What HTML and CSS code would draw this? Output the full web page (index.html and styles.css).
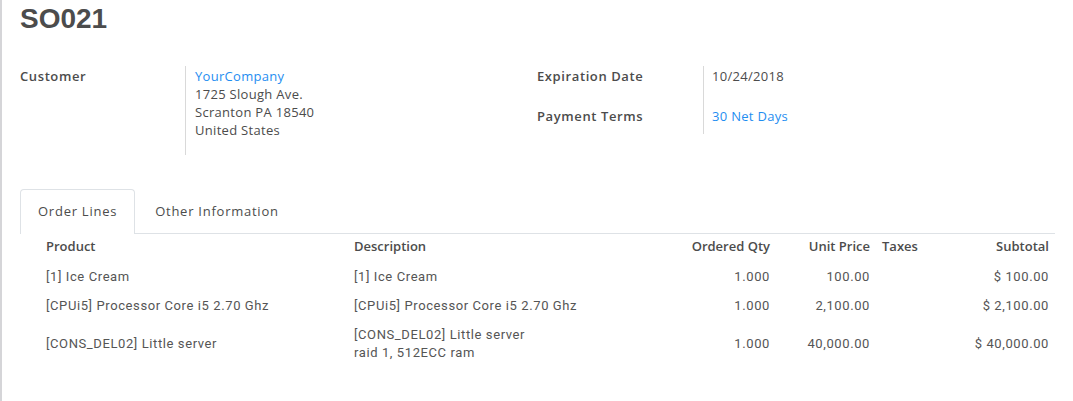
FILE: index.html
```html
<!DOCTYPE html>
<html>
<head>
<meta charset="utf-8">
<link rel="stylesheet" href="styles.css">
</head>
<body>
<div class="sheet">
  <h1 class="title">SO021</h1>
  <div class="groups">
    <div class="group group-left">
      <div class="pair">
        <div class="label">Customer</div>
        <div class="val val-address">
          <a class="link">YourCompany</a>
          <div>1725 Slough Ave.</div>
          <div>Scranton PA 18540</div>
          <div>United States</div>
        </div>
      </div>
    </div>
    <div class="group group-right">
      <div class="pair">
        <div class="label">Expiration Date</div>
        <div class="val val-first">10/24/2018</div>
      </div>
      <div class="pair">
        <div class="label">Payment Terms</div>
        <div class="val val-last"><a class="link">30 Net Days</a></div>
      </div>
    </div>
  </div>

  <div class="tabs">
    <div class="tab active">Order Lines</div>
    <div class="tab">Other Information</div>
  </div>

  <table class="lines">
    <colgroup>
      <col class="c-product">
      <col class="c-desc">
      <col class="c-qty">
      <col class="c-price">
      <col class="c-tax">
      <col class="c-sub">
    </colgroup>
    <thead>
      <tr>
        <th>Product</th>
        <th>Description</th>
        <th class="num">Ordered Qty</th>
        <th class="num">Unit Price</th>
        <th>Taxes</th>
        <th class="num">Subtotal</th>
      </tr>
    </thead>
    <tbody>
      <tr>
        <td>[1] Ice Cream</td>
        <td>[1] Ice Cream</td>
        <td class="num">1.000</td>
        <td class="num">100.00</td>
        <td></td>
        <td class="num">$ 100.00</td>
      </tr>
      <tr>
        <td>[CPUi5] Processor Core i5 2.70 Ghz</td>
        <td>[CPUi5] Processor Core i5 2.70 Ghz</td>
        <td class="num">1.000</td>
        <td class="num">2,100.00</td>
        <td></td>
        <td class="num">$ 2,100.00</td>
      </tr>
      <tr>
        <td>[CONS_DEL02] Little server</td>
        <td>[CONS_DEL02] Little server<br>raid 1, 512ECC ram</td>
        <td class="num">1.000</td>
        <td class="num">40,000.00</td>
        <td></td>
        <td class="num">$ 40,000.00</td>
      </tr>
    </tbody>
  </table>
</div>
</body>
</html>
```

FILE: styles.css
```css
html, body {
  margin: 0;
  padding: 0;
  background: #fff;
}

body {
  font-family: "Open Sans", "Liberation Sans", sans-serif;
  font-size: 13px;
  line-height: 18px;
  color: #4c4c4c;
}

.sheet {
  border-left: 2px solid #d5d5d8;
  min-height: 401px;
  box-sizing: border-box;
  padding: 0 18px 0 18px;
}

.title {
  margin: 0;
  padding-top: 2px;
  font-family: "Liberation Sans", sans-serif;
  font-weight: 700;
  font-size: 28px;
  line-height: 33px;
  color: #4c4c4c;
}

.groups {
  display: flex;
  margin-top: 31px;
}

.group-left {
  width: 517px;
}

.group-right {
  flex: 1;
}

.pair {
  display: flex;
}

.label {
  width: 165px;
  flex: none;
  font-weight: 600;
  letter-spacing: 0.6px;
  padding-top: 1px;
  color: #4c4c4c;
}

.group-right .label {
  width: 166px;
}

.val {
  border-left: 1px solid #d9d9d9;
  padding-left: 9px;
  padding-top: 1px;
  letter-spacing: 0.3px;
}

.group-right .val {
  padding-left: 8px;
}

.val-address {
  padding-bottom: 16px;
}

.val-first {
  padding-bottom: 21px;
}

.val-last {
  padding-bottom: 9px;
}

.link {
  color: #1f8ef1;
  text-decoration: none;
  display: block;
}

.tabs {
  display: flex;
  margin-top: 34px;
  border-bottom: 1px solid #dee2e6;
}

.tab {
  padding: 12px 17px 13px;
  margin-right: 2px;
  border: 1px solid transparent;
  border-bottom: none;
  border-radius: 4px 4px 0 0;
  color: #4c4c4c;
  margin-bottom: -1px;
  letter-spacing: 0.75px;
}

.tab.active {
  border-color: #dee2e6;
  background: #fff;
  padding-bottom: 14px;
}

.lines {
  margin-left: 20px;
  width: 1015px;
  border-collapse: collapse;
  table-layout: fixed;
  font-family: Roboto, "Liberation Sans", sans-serif;
  color: #555;
}

.c-product { width: 308px; }
.c-desc { width: 332px; }
.c-qty { width: 96px; }
.c-price { width: 100px; }
.c-tax { width: 84px; }
.c-sub { width: 95px; }

.lines th {
  font-family: "Open Sans", "Liberation Sans", sans-serif;
  font-weight: 600;
  color: #4c4c4c;
  text-align: left;
  padding: 3px 6px 8px;
  white-space: nowrap;
}

.lines td {
  padding: 5px 6px 6px;
  vertical-align: middle;
  white-space: nowrap;
  letter-spacing: 0.6px;
}

.lines .num {
  text-align: right;
}
```
